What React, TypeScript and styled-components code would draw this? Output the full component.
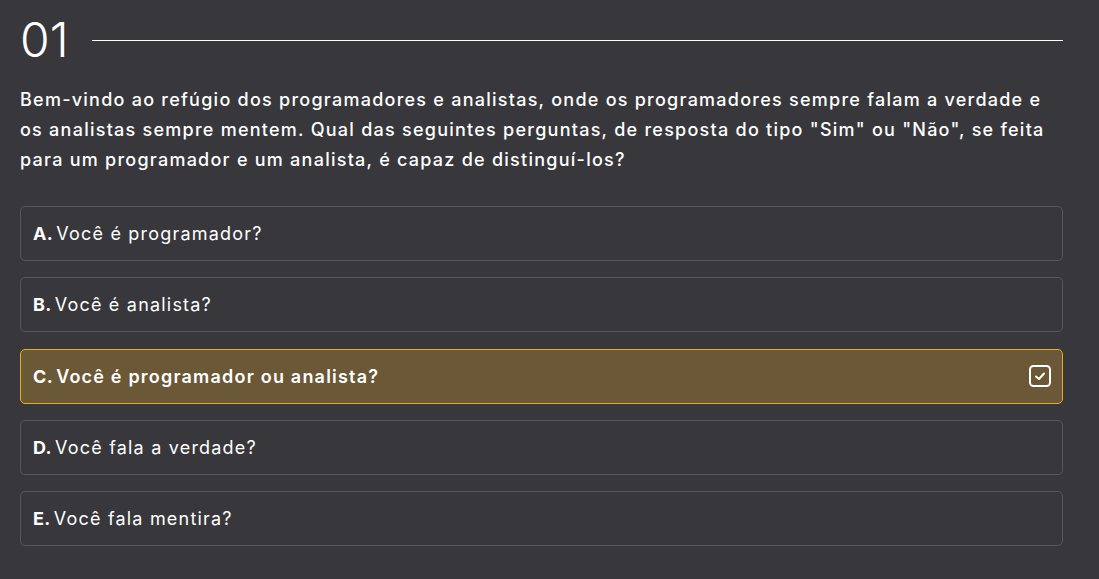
import React from "react";
import styled, { createGlobalStyle } from "styled-components";

const Global = createGlobalStyle`
  html, body { margin: 0; padding: 0; background: #38373c; }
  body { font-family: "Inter", "Noto Sans", sans-serif; color: #ffffff; }
  * { box-sizing: border-box; }
`;

const Page = styled.main`
  padding: 12px 36px 30px 20px;
  min-height: 579px;
`;

const Header = styled.header`
  display: flex;
  align-items: center;
  gap: 23px;
  height: 56px;
`;

const Number = styled.h1`
  margin: 0;
  font-size: 48px;
  font-weight: 300;
  line-height: 56px;
  color: #ffffff;
`;

const Rule = styled.hr`
  flex: 1;
  margin: 0;
  border: none;
  border-top: 1px solid #ffffff;
`;

const Question = styled.p`
  margin: 17px 0 0 0;
  font-size: 18px;
  font-weight: 500;
  letter-spacing: 1.25px;
  line-height: 30px;
  color: #ffffff;
`;

const Options = styled.ul`
  list-style: none;
  margin: 31px 0 0 0;
  padding: 0;
  display: flex;
  flex-direction: column;
  gap: 16.25px;
`;

const Option = styled.li<{ $selected?: boolean }>`
  display: flex;
  align-items: center;
  justify-content: space-between;
  height: 55px;
  padding: 0 10px 0 12px;
  border-radius: 5px;
  border: 1px solid ${(p) => (p.$selected ? "#e9a922" : "#58575c")};
  background: ${(p) => (p.$selected ? "#6a5837" : "transparent")};
  font-size: 18px;
  letter-spacing: 1.2px;
  font-weight: ${(p) => (p.$selected ? 600 : 400)};
  color: #ffffff;
`;

const Label = styled.span`
  display: flex;
  align-items: baseline;
  gap: 3px;
`;

const Letter = styled.b`
  font-weight: 700;
  letter-spacing: 0.4px;
`;

const Check = styled.svg`
  width: 24px;
  height: 24px;
  flex: none;
`;

const items = [
  { l: "A.", t: "Você é programador?" },
  { l: "B.", t: "Você é analista?" },
  { l: "C.", t: "Você é programador ou analista?", s: true },
  { l: "D.", t: "Você fala a verdade?" },
  { l: "E.", t: "Você fala mentira?" },
];

export default function App() {
  return (
    <>
      <Global />
      <Page>
        <Header>
          <Number>01</Number>
          <Rule />
        </Header>
        <Question>
          Bem-vindo ao refúgio dos programadores e analistas, onde os programadores sempre falam a verdade e os
          analistas sempre mentem. Qual das seguintes perguntas, de resposta do tipo "Sim" ou "Não", se feita para
          um programador e um analista, é capaz de distinguí-los?
        </Question>
        <Options>
          {items.map((it) => (
            <Option key={it.l} $selected={it.s}>
              <Label>
                <Letter>{it.l}</Letter>
                <span>{it.t}</span>
              </Label>
              {it.s && (
                <Check viewBox="0 0 24 24" fill="none" stroke="#ffffff" strokeWidth={2} strokeLinecap="round" strokeLinejoin="round">
                  <rect x="2" y="2" width="20" height="20" rx="3.5" />
                  <path d="m8 12.5 3 2.5 5-5.5" />
                </Check>
              )}
            </Option>
          ))}
        </Options>
      </Page>
    </>
  );
}
